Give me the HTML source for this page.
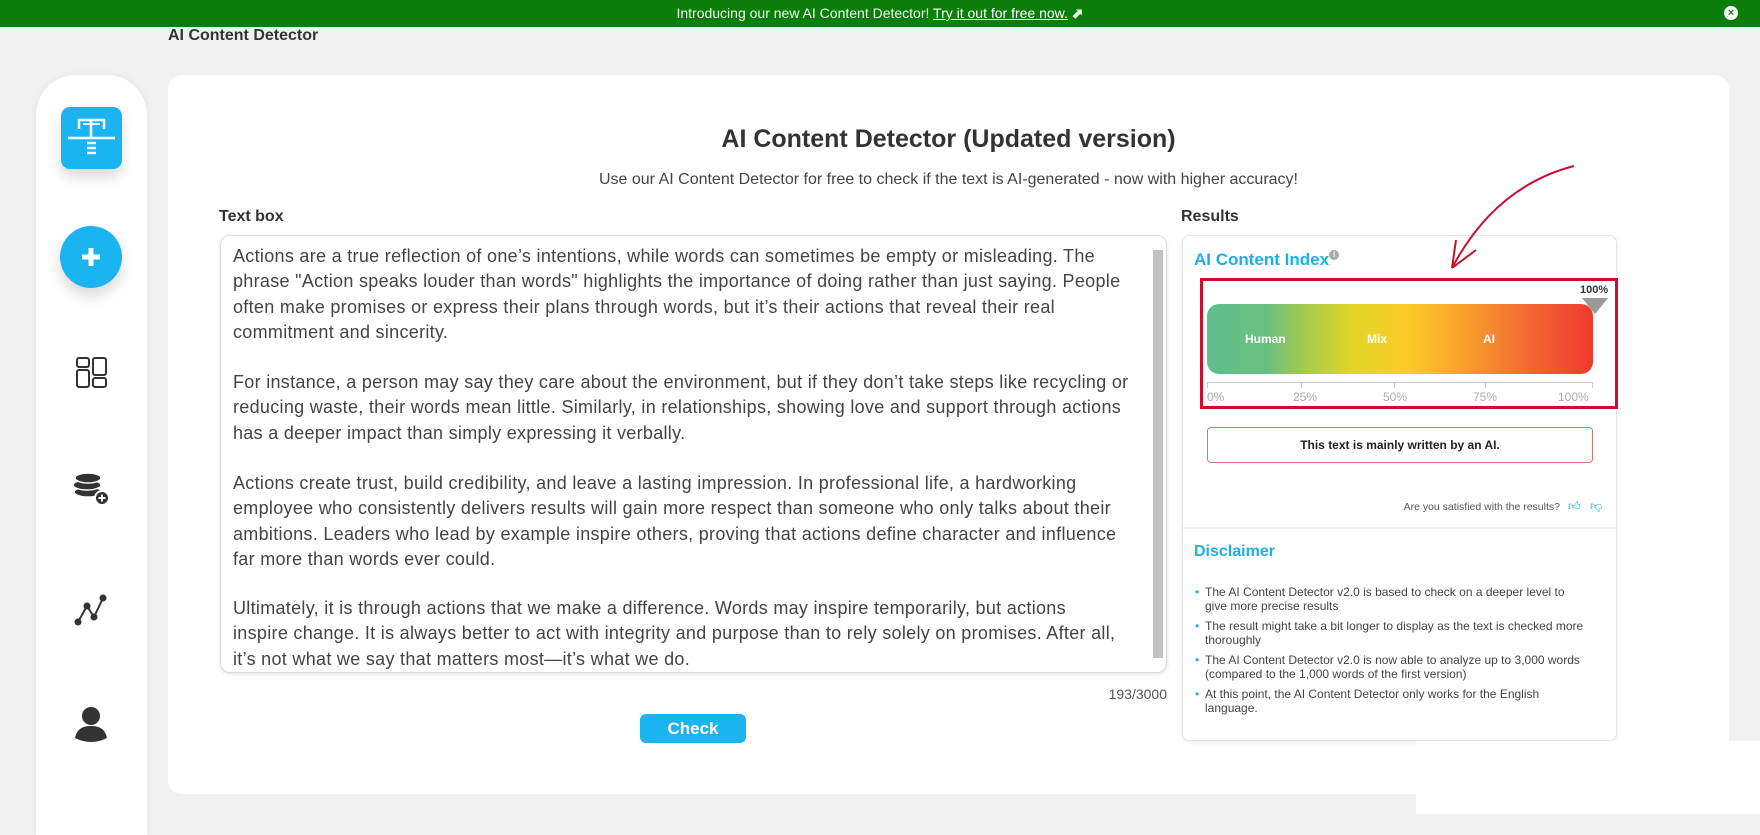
<!DOCTYPE html>
<html><head><meta charset="utf-8"><style>
*{margin:0;padding:0;box-sizing:border-box}
body{width:1760px;height:814px;background:#f1f1f2;font-family:"Liberation Sans",sans-serif;position:relative;overflow:hidden;color:#333}
.abs{position:absolute}
.banner{left:0;top:0;width:1760px;height:27px;background:#0b7d0b;color:#e8ffe8;font-size:14px;text-align:center;line-height:26px}
.banner u{color:#fff}
.side{left:36px;top:75px;width:111px;height:760px;background:#fff;border-radius:40px 40px 0 0;box-shadow:0 0 8px rgba(0,0,0,.06)}
.card{left:168px;top:75px;width:1561px;height:719px;background:#fff;border-radius:14px}
.ta{left:220px;top:235px;width:947px;height:438px;border:1px solid #ddd;border-radius:10px;box-shadow:0 1px 4px rgba(0,0,0,.12);background:#fff}
.ta p{position:absolute;left:12px;font-size:18px;line-height:25.3px;color:#444;white-space:nowrap;letter-spacing:0.3px}
.rc{left:1182px;top:235px;width:435px;height:506px;border:1px solid #e6e6e6;border-radius:8px;box-shadow:0 1px 4px rgba(0,0,0,.1);background:#fff}
.dis li{list-style:none;font-size:12px;color:#444;line-height:14px;margin-bottom:6px;padding-left:10px;position:relative}
.dis li:before{content:"•";position:absolute;left:0;color:#1ab0e8}
</style></head><body>
<div class="abs banner">Introducing our new AI Content Detector! <u>Try it out for free now.</u> <span style="font-weight:bold">⬈</span></div>
<div class="abs" style="right:22px;top:6px;width:14px;height:14px;border-radius:50%;background:#fff;color:#0b7d0b;font-size:11px;line-height:14px;text-align:center;font-weight:bold">×</div>
<div class="abs" style="left:168px;top:27px;font-size:16px;font-weight:bold;color:#333">AI Content Detector</div>

<div class="abs side"></div>
<div class="abs" style="left:61px;top:107px;width:61px;height:62px;background:#1ab5f0;border-radius:9px;box-shadow:0 8px 12px rgba(0,0,0,.15)">
<svg width="61" height="62" viewBox="0 0 61 62" fill="none" stroke="#fff" stroke-width="2.5"><path d="M7 31H54M18 22V13H43V22M30 13V31M26 36H35M26 41H35M26 46H35"/><path d="M22 17H39" stroke-width="2"/></svg></div>
<div class="abs" style="left:60px;top:226px;width:62px;height:62px;border-radius:50%;background:#1ab5f0;box-shadow:0 8px 14px rgba(0,0,0,.15)">
<svg width="62" height="62"><path d="M31 22V40M22 31H40" stroke="#fff" stroke-width="5"/></svg></div>
<svg class="abs" style="left:76px;top:357px" width="32" height="32" fill="none" stroke="#333" stroke-width="2"><rect x="1" y="1" width="12" height="9" rx="2"/><rect x="1" y="13" width="12" height="17" rx="2"/><rect x="17" y="1" width="13" height="17" rx="2"/><rect x="17" y="21" width="13" height="9" rx="2"/></svg>
<svg class="abs" style="left:70px;top:470px" width="44" height="40"><g fill="#333" stroke="#fff" stroke-width="1.5"><ellipse cx="18" cy="22" rx="14" ry="5"/><ellipse cx="17" cy="15" rx="14" ry="5"/><ellipse cx="18" cy="8" rx="13" ry="5"/></g><circle cx="32" cy="28" r="7" fill="#333" stroke="#fff" stroke-width="2"/><path d="M32 24.5V31.5M28.5 28H35.5" stroke="#fff" stroke-width="2"/></svg>
<svg class="abs" style="left:74px;top:593px" width="36" height="34" fill="#333" stroke="#333" stroke-width="2"><path d="M4 29L13 13L20 24L29 5" fill="none"/><circle cx="4" cy="29" r="2.5"/><circle cx="13" cy="13" r="2.5"/><circle cx="20" cy="24" r="2.5"/><circle cx="29" cy="5" r="2.5"/></svg>
<svg class="abs" style="left:74px;top:706px" width="34" height="36" fill="#333"><circle cx="17" cy="10" r="9"/><path d="M1 32C3 22 10 20 17 20S31 22 33 32Q17 40 1 32Z"/></svg>

<div class="abs card"></div>
<div class="abs" style="left:168px;width:1561px;top:125px;text-align:center;font-size:25px;font-weight:bold;color:#333">AI Content Detector (Updated version)</div>
<div class="abs" style="left:168px;width:1561px;top:171px;text-align:center;font-size:16px;color:#444">Use our AI Content Detector for free to check if the text is AI-generated - now with higher accuracy!</div>
<div class="abs" style="left:219px;top:208px;font-size:16px;font-weight:bold;color:#333">Text box</div>
<div class="abs" style="left:1181px;top:208px;font-size:16px;font-weight:bold;color:#333">Results</div>

<div class="abs ta">
<p style="top:8px">Actions are a true reflection of one’s intentions, while words can sometimes be empty or misleading. The<br>phrase "Action speaks louder than words" highlights the importance of doing rather than just saying. People<br>often make promises or express their plans through words, but it’s their actions that reveal their real<br>commitment and sincerity.</p>
<p style="top:134px">For instance, a person may say they care about the environment, but if they don’t take steps like recycling or<br>reducing waste, their words mean little. Similarly, in relationships, showing love and support through actions<br>has a deeper impact than simply expressing it verbally.</p>
<p style="top:235px">Actions create trust, build credibility, and leave a lasting impression. In professional life, a hardworking<br>employee who consistently delivers results will gain more respect than someone who only talks about their<br>ambitions. Leaders who lead by example inspire others, proving that actions define character and influence<br>far more than words ever could.</p>
<p style="top:360px">Ultimately, it is through actions that we make a difference. Words may inspire temporarily, but actions<br>inspire change. It is always better to act with integrity and purpose than to rely solely on promises. After all,<br>it’s not what we say that matters most—it’s what we do.</p>
<div style="position:absolute;right:3px;top:14px;width:10px;height:408px;background:#c1c1c1"></div>
</div>
<div class="abs" style="left:1080px;width:87px;top:686px;text-align:right;font-size:14px;color:#555">193/3000</div>
<div class="abs" style="left:640px;top:714px;width:106px;height:29px;background:#1ab5f0;border-radius:6px;color:#fff;font-weight:bold;font-size:17px;text-align:center;line-height:29px">Check</div>

<div class="abs rc">
<div style="position:absolute;left:0;right:0;top:291px;height:2px;background:#eee"></div>
</div>
<div class="abs" style="left:1194px;top:250px;font-size:17px;font-weight:bold;color:#1ab0e8">AI Content Index<sup style="display:inline-block;width:10px;height:10px;border-radius:50%;background:#aaa;color:#fff;font-size:8px;line-height:10px;text-align:center;vertical-align:8px">i</sup></div>
<div class="abs" style="left:1200px;top:278px;width:418px;height:131px;border:3px solid #c8102e"></div>
<div class="abs" style="left:1580px;top:284px;font-size:11px;font-weight:bold;color:#333">100%</div>
<svg class="abs" style="left:1582px;top:298px" width="26" height="16"><path d="M0 0H26L13 16Z" fill="#999"/></svg>
<div class="abs" style="left:1207px;top:304px;width:386px;height:70px;border-radius:12px;background:linear-gradient(90deg,#5fbf8e 0%,#6cc07e 16%,#a8cc48 26%,#e2d626 38%,#fbcb2a 52%,#f8a32a 66%,#f46b34 82%,#ee3a2e 100%);color:#fff;font-weight:bold;font-size:12px">
<span style="position:absolute;left:38px;top:28px">Human</span><span style="position:absolute;left:160px;top:28px">Mix</span><span style="position:absolute;left:276px;top:28px">AI</span></div>
<div class="abs" style="left:1207px;top:382px;width:386px;height:1px;background:#ccc"></div>
<div class="abs" style="left:1207px;top:382px;width:1px;height:6px;background:#ccc"></div>
<div class="abs" style="left:1301px;top:382px;width:1px;height:6px;background:#ccc"></div>
<div class="abs" style="left:1394px;top:382px;width:1px;height:6px;background:#ccc"></div>
<div class="abs" style="left:1485px;top:382px;width:1px;height:6px;background:#ccc"></div>
<div class="abs" style="left:1592px;top:382px;width:1px;height:6px;background:#ccc"></div>
<div class="abs" style="left:1207px;top:390px;font-size:12px;color:#aaa">0%</div>
<div class="abs" style="left:1293px;top:390px;font-size:12px;color:#aaa">25%</div>
<div class="abs" style="left:1383px;top:390px;font-size:12px;color:#aaa">50%</div>
<div class="abs" style="left:1473px;top:390px;font-size:12px;color:#aaa">75%</div>
<div class="abs" style="left:1558px;top:390px;font-size:12px;color:#aaa">100%</div>
<div class="abs" style="left:1207px;top:427px;width:386px;height:36px;border:1px solid #e07070;border-radius:4px;text-align:center;line-height:34px;font-size:12px;font-weight:bold;color:#222">This text is mainly written by an AI.</div>
<div class="abs" style="left:1360px;top:501px;width:200px;text-align:right;font-size:10.5px;color:#555">Are you satisfied with the results?</div>
<div class="abs" style="left:1568px;top:499px;font-size:12px;color:#1ab0e8">👍︎</div>
<div class="abs" style="left:1590px;top:499px;font-size:12px;color:#1ab0e8">👎︎</div>
<div class="abs" style="left:1194px;top:543px;font-size:16px;font-weight:bold;color:#1ab0e8">Disclaimer</div>
<ul class="abs dis" style="left:1195px;top:585px;width:392px">
<li>The AI Content Detector v2.0 is based to check on a deeper level to give more precise results</li>
<li>The result might take a bit longer to display as the text is checked more thoroughly</li>
<li>The AI Content Detector v2.0 is now able to analyze up to 3,000 words (compared to the 1,000 words of the first version)</li>
<li>At this point, the AI Content Detector only works for the English language.</li>
</ul>
<svg class="abs" style="left:1440px;top:160px" width="140" height="115" fill="none" stroke="#c8102e" stroke-width="2"><path d="M134 6C80 20 40 55 12 108"/><path d="M12 108L16 80M12 108L36 90"/></svg>
<div class="abs" style="left:1416px;top:741px;width:344px;height:73px;background:#fff"></div>
</body></html>
